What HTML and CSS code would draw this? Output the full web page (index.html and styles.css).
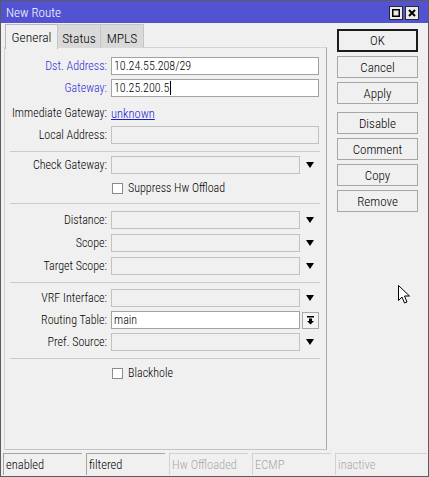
FILE: index.html
```html
<!DOCTYPE html>
<html lang="en">
<head>
  <meta charset="UTF-8" />
  <title>New Route</title>
  <link rel="stylesheet" href="styles.css">
</head>
<body>
  <div class="window">
    <div class="titlebar">
      <span class="title">New Route</span>
      <div class="title-btns">
        <span class="tbtn"><svg width="8" height="8" viewBox="0 0 8 8"><rect x="0.75" y="0.75" width="6.5" height="6.5" fill="none" stroke="#000" stroke-width="1.5"/></svg></span>
        <span class="tbtn"><svg width="8" height="8" viewBox="0 0 8 8"><path d="M1 1 L7 7 M7 1 L1 7" stroke="#000" stroke-width="2"/></svg></span>
      </div>
    </div>

    <div class="content">
      <div class="main">
        <div class="tabs">
          <div class="tab active">General</div>
          <div class="tab">Status</div>
          <div class="tab">MPLS</div>
        </div>

        <div class="panel">
          <div class="row">
            <label class="lbl blue">Dst. Address:</label>
            <div class="field white">10.24.55.208/29</div>
          </div>
          <div class="row">
            <label class="lbl blue">Gateway:</label>
            <div class="field white">10.25.200.5<span class="caret"></span></div>
          </div>
          <div class="row text-row">
            <label class="lbl">Immediate Gateway:</label>
            <a class="link">unknown</a>
          </div>
          <div class="row">
            <label class="lbl">Local Address:</label>
            <div class="field"></div>
          </div>

          <hr class="sep">

          <div class="row">
            <label class="lbl">Check Gateway:</label>
            <div class="field short"></div>
            <span class="drop"></span>
          </div>
          <div class="row check-row">
            <span class="box"></span>
            <span>Suppress Hw Offload</span>
          </div>

          <hr class="sep">

          <div class="group">
            <div class="row">
              <label class="lbl">Distance:</label>
              <div class="field short"></div>
              <span class="drop"></span>
            </div>
            <div class="row">
              <label class="lbl">Scope:</label>
              <div class="field short"></div>
              <span class="drop"></span>
            </div>
            <div class="row">
              <label class="lbl">Target Scope:</label>
              <div class="field short"></div>
              <span class="drop"></span>
            </div>
          </div>

          <hr class="sep">

          <div class="group tight">
            <div class="row">
              <label class="lbl">VRF Interface:</label>
              <div class="field short"></div>
              <span class="drop"></span>
            </div>
            <div class="row">
              <label class="lbl">Routing Table:</label>
              <div class="field short white">main</div>
              <span class="pick">
                <svg width="9" height="9" viewBox="0 0 9 9">
                  <rect x="1" y="0" width="7" height="1.5" fill="#000"/>
                  <path d="M3 2.5 H6 V5 H8 L4.5 8.5 L1 5 H3 Z" fill="#000"/>
                </svg>
              </span>
            </div>
            <div class="row">
              <label class="lbl">Pref. Source:</label>
              <div class="field short"></div>
              <span class="drop"></span>
            </div>
          </div>

          <hr class="sep">

          <div class="row check-row">
            <span class="box"></span>
            <span>Blackhole</span>
          </div>
        </div>
      </div>

      <div class="actions">
        <button class="btn default">OK</button>
        <button class="btn">Cancel</button>
        <button class="btn">Apply</button>
        <div class="btn-gap"></div>
        <button class="btn">Disable</button>
        <button class="btn">Comment</button>
        <button class="btn">Copy</button>
        <button class="btn">Remove</button>
      </div>
    </div>

    <div class="statusbar">
      <div class="cell">enabled</div>
      <div class="cell">filtered</div>
      <div class="cell off">Hw Offloaded</div>
      <div class="cell off">ECMP</div>
      <div class="cell off wide">inactive</div>
    </div>

    <!-- mouse pointer -->
    <svg class="pointer" width="13" height="20" viewBox="0 0 13 20">
      <path d="M0.5 0.5 V15.5 L4 12 L6.5 18 L9 17 L6.5 11 H11.5 Z" fill="#fff" stroke="#000" stroke-width="1"/>
    </svg>
  </div>
</body>
</html>
```

FILE: styles.css
```css
html, body {
  margin: 0;
  padding: 0;
  background: #f0f0f0;
}

.window {
  position: relative;
  width: 427px;
  height: 475px;
  border: 1px solid #5c5c5c;
  background: #f0f0f0;
  font-family: Roboto, "Liberation Sans", sans-serif;
  font-stretch: 75%;
  font-weight: 350;
  font-size: 12px;
  color: #000;
  display: flex;
  flex-direction: column;
  overflow: hidden;
}

/* === Title bar === */
.titlebar {
  height: 22px;
  flex-shrink: 0;
  background: #5252d2;
  display: flex;
  align-items: center;
  justify-content: space-between;
  padding: 0 9px 0 5px;
}

.title {
  color: #fff;
  font-size: 13px;
}

.title-btns {
  display: flex;
  gap: 2px;
  margin-top: 2px;
}

.tbtn {
  width: 12px;
  height: 12px;
  background: #eaeaea;
  border: 1px solid #2a2a2a;
  display: flex;
  align-items: center;
  justify-content: center;
}

/* === Body === */
.content {
  flex: 1;
  display: flex;
  padding: 1px 0 0 3px;
}

.main {
  width: 323px;
  display: flex;
  flex-direction: column;
}

.tabs {
  display: flex;
  height: 24px;
  padding-left: 1px;
  position: relative;
  z-index: 1;
  margin-bottom: -1px;
}

.tab {
  width: 44px;
  box-sizing: border-box;
  display: flex;
  align-items: center;
  justify-content: center;
  background: #d9d9d9;
  border: 1px solid #c6c6c6;
  border-bottom: none;
  margin-left: -1px;
  font-size: 13.5px;
  padding-top: 2px;
}

.tab.active {
  width: 53px;
  height: 25px;
  background: #f0f0f0;
  border-color: #b8b8b8;
  margin-left: 0;
  padding-top: 0;
}

.panel {
  flex: 1;
  display: flex;
  flex-direction: column;
  border: 1px solid #d4d4d4;
  border-right-color: #a9a9a9;
  border-bottom-color: #c4c4c4;
  padding-top: 9px;
  margin-bottom: 3px;
}

.row {
  display: flex;
  align-items: center;
  height: 18px;
  margin-bottom: 4px;
  flex-shrink: 0;
}

.lbl {
  width: 106px;
  box-sizing: border-box;
  text-align: right;
  padding-right: 4px;
  flex-shrink: 0;
  white-space: nowrap;
}

.blue {
  color: #2e2ed6;
}

.text-row {
  margin-top: 3px;
}

.link {
  color: #1b1bd0;
  text-decoration: underline;
  font-size: 12.5px;
}

.field {
  width: 208px;
  height: 18px;
  box-sizing: border-box;
  border: 1px solid #c2c2c2;
  background: #f0f0f0;
  padding: 0 2px;
  display: flex;
  align-items: center;
}

.field.white {
  background: #fff;
  border-color: #a2a2a2;
}

.field.short {
  width: 189px;
}

.caret {
  display: inline-block;
  width: 1px;
  height: 14px;
  background: #000;
  margin-left: 1px;
}

.drop {
  width: 0;
  height: 0;
  border-left: 4.5px solid transparent;
  border-right: 4.5px solid transparent;
  border-top: 6px solid #000;
  margin-left: 6px;
}

.pick {
  width: 17px;
  height: 17px;
  box-sizing: border-box;
  border: 1px solid #a8a8a8;
  background: #f4f4f4;
  margin-left: 2px;
  display: flex;
  align-items: center;
  justify-content: center;
}

.check-row {
  padding-left: 107px;
  margin-top: 1px;
}

.box {
  width: 11px;
  height: 11px;
  box-sizing: border-box;
  border: 1px solid #8a8a8a;
  background: #fff;
  margin-right: 5px;
}

.sep {
  flex-shrink: 0;
  border: none;
  border-top: 1px solid #cbcbcb;
  margin: 2px 6px 4px 5px;
}

.panel > .sep:first-of-type {
  margin-top: 3px;
}

.group {
  display: flex;
  flex-direction: column;
  gap: 5px;
  padding: 3px 0 5px;
}

.group .row {
  margin: 0;
}

.group.tight {
  gap: 4px;
  padding-top: 2px;
}

/* === Right button column === */
.actions {
  display: flex;
  flex-direction: column;
  gap: 4px;
  padding: 5px 0 0 10px;
}

.btn {
  width: 81px;
  height: 22px;
  box-sizing: border-box;
  font-family: inherit;
  font-stretch: 75%;
  font-weight: 350;
  font-size: 13px;
  background: #f0f0f0;
  border: 1px solid #a6a6a6;
  padding: 0;
  margin: 0;
  color: #000;
}

.btn.default {
  height: 23px;
  border: 2px solid #1c1c1c;
}

.btn-gap {
  height: 0;
}

/* === Status bar === */
.statusbar {
  flex-shrink: 0;
  display: flex;
  gap: 4px;
  padding: 0 1px 1px 2px;
  height: 22px;
}

.cell {
  width: 79px;
  box-sizing: border-box;
  border-top: 1px solid #a4a4a4;
  border-left: 1px solid #a4a4a4;
  padding-left: 2px;
  display: flex;
  align-items: center;
  font-size: 12.5px;
}

.cell.off {
  color: #a8a8a8;
  border-color: #d2d2d2;
}

.cell.wide {
  flex: 1;
}

.pointer {
  position: absolute;
  left: 397px;
  top: 284px;
}
```
